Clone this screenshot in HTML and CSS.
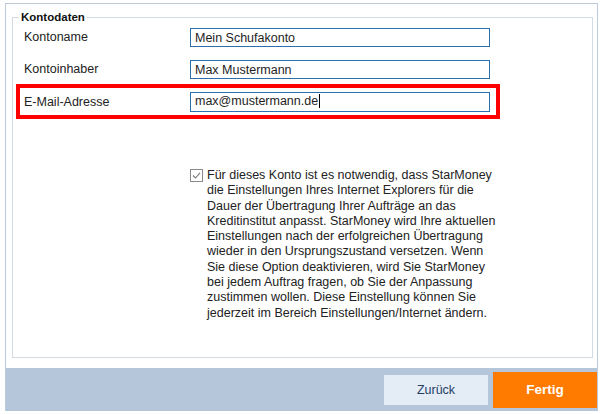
FILE: index.html
```html
<!DOCTYPE html>
<html lang="de">
<head>
    <meta charset="UTF-8">
    <meta name="viewport" content="width=device-width, initial-scale=1.0">
    <title>Kontodaten</title>
    <link rel="stylesheet" href="styles.css">
</head>
<body>
    <div class="window">
        <div class="content">
            <fieldset class="group">
                <legend>Kontodaten</legend>

                <div class="row">
                    <label for="kontoname">Kontoname</label>
                    <input type="text" id="kontoname" value="Mein Schufakonto">
                </div>

                <div class="row">
                    <label for="inhaber">Kontoinhaber</label>
                    <input type="text" id="inhaber" value="Max Mustermann">
                </div>

                <div class="row highlight">
                    <label for="email">E-Mail-Adresse</label>
                    <div class="field">max@mustermann.de<span class="caret"></span></div>
                </div>

                <div class="option">
                    <span class="checkbox">
                        <svg viewBox="0 0 13 13" width="13" height="13">
                            <rect x="0.5" y="0.5" width="12" height="12" fill="#fff" stroke="#8a8a8a"/>
                            <path d="M3 6.5 L5.5 9 L10 3.8" fill="none" stroke="#7a7a7a" stroke-width="1.1"/>
                        </svg>
                    </span>
                    <p>Für dieses Konto ist es notwendig, dass StarMoney die Einstellungen Ihres Internet Explorers für die Dauer der Übertragung Ihrer Aufträge an das Kreditinstitut anpasst. StarMoney wird Ihre aktuellen Einstellungen nach der erfolgreichen Übertragung wieder in den Ursprungszustand versetzen. Wenn Sie diese Option deaktivieren, wird Sie StarMoney bei jedem Auftrag fragen, ob Sie der Anpassung zustimmen wollen. Diese Einstellung können Sie jederzeit im Bereich Einstellungen/Internet ändern.</p>
                </div>
            </fieldset>
        </div>

        <div class="footer">
            <button class="btn btn-back">Zurück</button>
            <button class="btn btn-done">Fertig</button>
        </div>
    </div>
</body>
</html>
```

FILE: styles.css
```css
:root {
    --panel-border: #bccbdb;
    --group-border: #d3dae2;
    --input-border: #2b6fb0;
    --footer-bg: #b6c6da;
    --text-color: #1e1e1e;
}

* {
    margin: 0;
    padding: 0;
    box-sizing: border-box;
    font-family: "Liberation Sans", Arial, sans-serif;
}

body {
    background: #fff;
    color: var(--text-color);
    font-size: 12.5px;
}

.window {
    margin: 3px 4px 0 5px;
    height: 408px;
    border: 1px solid var(--panel-border);
    border-bottom: none;
    display: flex;
    flex-direction: column;
}

.content {
    flex: 1;
    display: flex;
    flex-direction: column;
    padding: 6px 4px 10px 6px;
}

.group {
    flex: 1;
    border: 1px solid var(--group-border);
    padding: 0 0 0 6px;
    display: flex;
    flex-direction: column;
}

.group legend {
    font-size: 11.5px;
    font-weight: bold;
    line-height: 14px;
    padding: 0 2px;
    color: #111;
}

.row {
    display: flex;
    align-items: center;
    margin-left: 5px;
    margin-top: 13px;
}

.row:first-of-type {
    margin-top: 4px;
}

.row label {
    width: 166px;
    line-height: 19px;
    color: #222;
}

.row input,
.row .field {
    width: 300px;
    height: 19px;
    border: 1px solid var(--input-border);
    padding: 0 4px;
    font-size: 12.5px;
    color: var(--text-color);
    outline: none;
    line-height: 17px;
    background: #fff;
}

.row.highlight {
    align-self: flex-start;
    margin: 5px 0 0 -3px;
    border: 4px solid #f00;
    padding: 4px 6px 3px 4px;
}

.row .field {
    height: 20px;
}

.caret {
    display: inline-block;
    width: 1px;
    height: 14px;
    background: #000;
    vertical-align: -3px;
    margin-left: 1px;
}

.option {
    display: flex;
    gap: 4px;
    margin: 49px 0 0 171px;
}

.checkbox {
    flex: none;
    padding-top: 1px;
}

.checkbox svg {
    display: block;
}

.option p {
    width: 292px;
    line-height: 15.3px;
    color: #222;
}

.footer {
    height: 43px;
    background: var(--footer-bg);
    display: flex;
    align-items: center;
    justify-content: flex-end;
    gap: 5px;
}

.btn {
    border: none;
    width: 104px;
    cursor: pointer;
}

.btn-back {
    height: 30px;
    background: #e4ecf6;
    color: #1f3f66;
    font-size: 12.5px;
}

.btn-done {
    height: 36px;
    background: #ff7b00;
    color: #fff;
    font-size: 13.5px;
    font-weight: bold;
}
```
